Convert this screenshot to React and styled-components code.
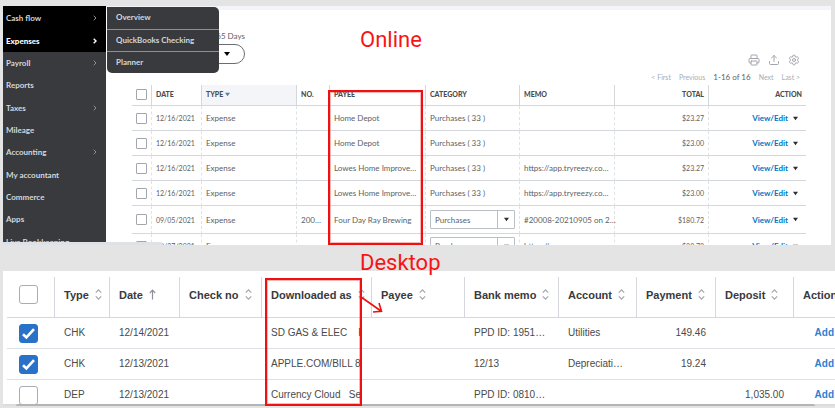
import styled, { createGlobalStyle } from "styled-components";
import { Printer, Upload, Settings } from "lucide-react";

const GlobalStyle = createGlobalStyle`
  * {
    box-sizing: border-box;
  }

  body {
    margin: 0;
    background: #e4e4e4;
    overflow: hidden;
  }

  button, select, input {
    font: inherit;
    margin: 0;
  }

  table {
    border-collapse: separate;
    border-spacing: 0;
    table-layout: fixed;
    width: 100%;
  }
`;

const Page = styled.main`
  display: flex;
  flex-direction: column;
  gap: 26px;
  padding-top: 6px;
`;

/* ---------- Online ---------- */

const OnlinePanel = styled.section`
  position: relative;
  display: flex;
  height: 239px;
  margin: 0 4px 0 3px;
  overflow: hidden;
  background: #fff;
  font-family: Lato, "Open Sans", sans-serif;
  font-size: 8px;
  line-height: 10px;
  color: #5c5f66;
`;

const Sidebar = styled.nav`
  flex: 0 0 103px;
  background: #393a3d;
  border-top: 1px solid #000;
`;

const Menu = styled.ul`
  display: grid;
  grid-auto-rows: 1fr;
  height: 246px;
  margin: 0;
  padding: 0;
  list-style: none;
`;

const MenuLink = styled.a`
  display: flex;
  align-items: center;
  justify-content: space-between;
  height: 100%;
  padding: 0 9px 0 3px;
  background: ${({ $dark }) => ($dark ? "#000" : "transparent")};
  color: ${({ $active }) => ($active ? "#fff" : "#d4d7dc")};
  font-weight: ${({ $active }) => ($active ? 900 : 700)};
  text-decoration: none;
`;

const Flyout = styled.ul`
  position: absolute;
  z-index: 2;
  top: 1px;
  left: 104px;
  width: 112px;
  margin: 0;
  padding: 0;
  list-style: none;
  overflow: hidden;
  background: #393a3d;
  border-radius: 0 5px 5px 5px;
`;

const FlyoutItem = styled.li`
  height: 22px;
  padding: 0 9px;
  line-height: 20px;

  & + & {
    border-top: 1px solid #8d9096;
  }

  a {
    color: #d4d7dc;
    font-weight: 700;
    text-decoration: none;
  }
`;

const Content = styled.div`
  flex: 1;
  min-width: 0;
  padding: 0 25px 0 26px;
  border-top: 4px solid #f4f5f8;
`;

const Toolbar = styled.div`
  display: flex;
  justify-content: space-between;
  height: 75px;
  padding: 21px 6px 3px 0;
`;

const Filters = styled.div`
  display: flex;
  flex-direction: column;
  gap: 3px;
  width: 113px;
  text-align: right;
`;

const Pill = styled.button`
  display: flex;
  align-items: center;
  justify-content: flex-end;
  gap: 5px;
  height: 20px;
  padding: 0 14px;
  background: #fff;
  border: 1px solid #6b6c72;
  border-radius: 10px;
  color: #0077c5;
`;

const Tools = styled.div`
  display: flex;
  flex-direction: column;
  align-items: flex-end;
  justify-content: flex-end;
  gap: 6px;
`;

const ToolRow = styled.div`
  display: flex;
  align-items: center;
  gap: 8px;
`;

const IconButton = styled.button`
  display: flex;
  padding: 0;
  background: none;
  border: 0;
  color: #a3a6ac;
`;

const PageButton = styled.button`
  padding: 0;
  background: none;
  border: 0;
  font-size: 7px;
  color: #a9acb3;
`;

const Th = styled.th`
  height: 21px;
  padding: 0 4px 2px;
  text-align: ${({ $right }) => ($right ? "right" : "left")};
  font-size: 7px;
  font-weight: 900;
  color: #4a4c50;
  background: ${({ $sorted }) => ($sorted ? "#f4f5f8" : "#fff")};
  border-bottom: 1px solid #d4d7dc;
  white-space: nowrap;

  & + & {
    border-left: 1px solid #d4d7dc;
  }
`;

const Td = styled.td`
  height: ${({ $tall }) => ($tall ? 28 : 25)}px;
  padding: 0 4px;
  text-align: ${({ $right }) => ($right ? "right" : "left")};
  font-size: ${({ $number }) => ($number ? 7 : 8)}px;
  border-bottom: 1px solid #d4d7dc;
  white-space: nowrap;

  & + & {
    border-left: 1px dashed #e0e2e6;
  }
`;

const SmallCheck = styled.input`
  appearance: none;
  display: block;
  width: 11px;
  height: 11px;
  background: #fff;
  border: 1px solid #a3a6ac;
  border-radius: 1px;
`;

const SelectBox = styled.div`
  position: relative;
  display: flex;
  height: 19px;
  border: 1px solid #babec5;
  border-radius: 1px;

  select {
    appearance: none;
    width: 100%;
    padding: 0 0 0 4px;
    background: none;
    border: 0;
    color: inherit;
  }
`;

const SelectArrow = styled.span`
  position: absolute;
  top: 0;
  right: 0;
  bottom: 0;
  display: flex;
  align-items: center;
  justify-content: center;
  width: 17px;
  border-left: 1px solid #babec5;
  pointer-events: none;
`;

const RowAction = styled.div`
  display: flex;
  align-items: center;
  justify-content: flex-end;
  gap: 5px;
  padding-right: 4px;

  a {
    color: #0077c5;
    font-weight: 700;
    text-decoration: none;
  }
`;

const StatusBar = styled.div`
  position: absolute;
  bottom: 0;
  left: 0;
  width: 160px;
  height: 3px;
  background: #dee1e6;
  border-top-right-radius: 3px;
`;

/* ---------- Desktop ---------- */

const DesktopPanel = styled.section`
  position: relative;
  height: 135px;
  margin-left: 3px;
  padding: 6px 0 0 4px;
  overflow: hidden;
  background: #fff;
  font-family: "Liberation Sans", Arial, sans-serif;
  font-size: 10px;
  line-height: 12px;
  color: #4a4a4a;
`;

const BankTh = styled.th`
  height: 41px;
  padding: 0 0 5px 9px;
  text-align: left;
  font-size: 11px;
  color: #393a3d;
  border-bottom: 1px solid #d4d7dc;
  white-space: nowrap;

  & + & {
    border-left: 1px solid #d4d7dc;
  }
`;

const ThLabel = styled.span`
  display: flex;
  align-items: center;
  gap: 6px;
`;

const BankTd = styled.td`
  height: 31px;
  padding: 0 9px 0 ${({ $check }) => ($check ? 9 : 10)}px;
  text-align: ${({ $right }) => ($right ? "right" : "left")};
  border-bottom: 1px solid #dcdfe3;
  white-space: nowrap;
`;

const ActionTd = styled(BankTd)`
  padding: 0 1px 0 0;
`;

const Clip = styled.span`
  display: block;
  overflow: hidden;
  white-space: pre;
`;

const AddLink = styled.a`
  color: #2f7fd0;
  font-weight: 700;
  text-decoration: none;
`;

const CheckLabel = styled.label`
  position: relative;
  display: block;
  width: 19px;
  height: 19px;
  margin-left: 3px;

  input {
    appearance: none;
    display: block;
    width: 19px;
    height: 19px;
    background: #fff;
    border: 1px solid #a9acb1;
    border-radius: 3px;
  }

  input:checked {
    background: #2a72c8;
    border-color: #2a72c8;
  }

  svg {
    position: absolute;
    top: 3px;
    left: 3px;
    pointer-events: none;
  }
`;

const ScrollTrack = styled.div`
  position: absolute;
  right: 0;
  bottom: 0;
  left: 0;
  height: 2px;
  padding: 0 20px 0 13px;
  background: #dcdcdc;

  &::before {
    content: "";
    display: block;
    height: 2px;
    background: #b4b4b4;
    border-radius: 2px 2px 0 0;
  }
`;

/* ---------- Red notes on top of both panels ---------- */

const Note = styled.h2`
  position: absolute;
  z-index: 3;
  top: ${({ $top }) => $top}px;
  left: 360px;
  margin: 0;
  font-family: Roboto, sans-serif;
  font-size: 22px;
  line-height: 26px;
  font-weight: 400;
  color: #f81414;
`;

const RedBox = styled.div`
  position: absolute;
  z-index: 3;
  top: ${({ $top }) => $top}px;
  left: ${({ $left }) => $left}px;
  width: ${({ $width }) => $width}px;
  height: ${({ $height }) => $height}px;
  border: 2px solid #ee1111;
  outline: 1px solid rgba(238, 17, 17, 0.3);
  outline-offset: -3px;
`;

const NoteArrow = styled.svg`
  position: absolute;
  z-index: 3;
  top: 296px;
  left: 360px;
`;

const Caret = ({ size = 5, color = "#2b2c2f" }) => (
  <svg width={size} height={size} viewBox="0 0 6 6" aria-hidden="true">
    <path d="M0 1h6L3 5z" fill={color} />
  </svg>
);

const Chevron = ({ active }) => (
  <svg width="4" height="6" viewBox="0 0 4 6" fill="none" aria-hidden="true">
    <path
      d="M0.7 0.7L3 3L0.7 5.3"
      stroke={active ? "#fff" : "#8d9096"}
      strokeWidth={active ? 1.4 : 1}
    />
  </svg>
);

const SortIcon = () => (
  <svg width="7" height="11" viewBox="0 0 7 11" fill="none" aria-hidden="true">
    <path
      d="M0.8 3.6l2.7-2.7 2.7 2.7M0.8 7.4l2.7 2.7 2.7-2.7"
      stroke="#a3a6ac"
      strokeWidth="1.2"
    />
  </svg>
);

const ArrowUp = () => (
  <svg width="7" height="11" viewBox="0 0 7 11" fill="none" aria-hidden="true">
    <path
      d="M3.5 10.5V1.2M0.8 4l2.7-2.8L6.2 4"
      stroke="#8d9096"
      strokeWidth="1.2"
    />
  </svg>
);

const menu = [
  { label: "Cash flow", arrow: true, dark: true },
  { label: "Expenses", arrow: true, dark: true, active: true },
  { label: "Payroll", arrow: true },
  { label: "Reports" },
  { label: "Taxes", arrow: true },
  { label: "Mileage" },
  { label: "Accounting", arrow: true },
  { label: "My accountant" },
  { label: "Commerce" },
  { label: "Apps" },
  { label: "Live Bookkeeping" },
];

const expenses = [
  { date: "12/16/2021", payee: "Home Depot", total: "$23.27" },
  { date: "12/16/2021", payee: "Home Depot", total: "$23.00" },
  {
    date: "12/16/2021",
    payee: "Lowes Home Improve…",
    memo: "https://app.tryreezy.co…",
    total: "$23.27",
  },
  {
    date: "12/16/2021",
    payee: "Lowes Home Improve…",
    memo: "https://app.tryreezy.co…",
    total: "$23.00",
  },
  {
    date: "09/05/2021",
    no: "200…",
    payee: "Four Day Ray Brewing",
    memo: "#20008-20210905 on 2…",
    total: "$180.72",
    editable: true,
    tall: true,
  },
  {
    date: "08/27/2021",
    memo: "https://",
    total: "$88.78",
    editable: true,
  },
];

const bankHeads = [
  "Type",
  "Date",
  "Check no",
  "Downloaded as",
  "Payee",
  "Bank memo",
  "Account",
  "Payment",
  "Deposit",
];

const bankRows = [
  {
    type: "CHK",
    date: "12/14/2021",
    name: "SD GAS & ELEC    F",
    memo: "PPD ID: 1951…",
    account: "Utilities",
    payment: "149.46",
    checked: true,
  },
  {
    type: "CHK",
    date: "12/13/2021",
    name: "APPLE.COM/BILL 86",
    memo: "12/13",
    account: "Depreciati…",
    payment: "19.24",
    checked: true,
  },
  {
    type: "DEP",
    date: "12/13/2021",
    name: "Currency Cloud   Ser",
    memo: "PPD ID: 0810…",
    deposit: "1,035.00",
  },
];

const Check = ({ label, checked }) => (
  <CheckLabel>
    <input type="checkbox" aria-label={label} defaultChecked={checked} />
    {checked && (
      <svg width="13" height="13" viewBox="0 0 13 13" fill="none">
        <path d="M1 7.2l3.4 3.3L12 2.2" stroke="#fff" strokeWidth="2.6" />
      </svg>
    )}
  </CheckLabel>
);

const Cols = ({ widths }) => (
  <colgroup>
    {widths.map((w, i) => (
      <col key={i} width={w || undefined} />
    ))}
  </colgroup>
);

const Online = () => (
  <OnlinePanel>
    <Sidebar>
      <Menu>
        {menu.map(({ label, arrow, dark, active }) => (
          <li key={label}>
            <MenuLink href="#" $dark={dark} $active={active}>
              {label}
              {arrow && <Chevron active={active} />}
            </MenuLink>
          </li>
        ))}
      </Menu>
    </Sidebar>
    <Flyout>
      {["Overview", "QuickBooks Checking", "Planner"].map((item) => (
        <FlyoutItem key={item}>
          <a href="#">{item}</a>
        </FlyoutItem>
      ))}
    </Flyout>
    <Content>
      <Toolbar>
        <Filters>
          <span>Last 365 Days</span>
          <Pill>
            Filters <Caret size={6} color="#000" />
          </Pill>
        </Filters>
        <Tools>
          <ToolRow>
            <IconButton aria-label="Print">
              <Printer size={12} />
            </IconButton>
            <IconButton aria-label="Export">
              <Upload size={12} />
            </IconButton>
            <IconButton aria-label="Settings">
              <Settings size={12} />
            </IconButton>
          </ToolRow>
          <ToolRow>
            <PageButton>&lt; First</PageButton>
            <PageButton>Previous</PageButton>
            <span>1-16 of 16</span>
            <PageButton>Next</PageButton>
            <PageButton>Last &gt;</PageButton>
          </ToolRow>
        </Tools>
      </Toolbar>
      <table>
        <Cols widths={[19, 50, 95, 33, 0, 94, 95, 94, 98]} />
        <thead>
          <tr>
            <Th>
              <SmallCheck type="checkbox" aria-label="Select all" />
            </Th>
            <Th>DATE</Th>
            <Th $sorted>
              TYPE <Caret color="#5c7f9c" />
            </Th>
            <Th>NO.</Th>
            <Th>PAYEE</Th>
            <Th>CATEGORY</Th>
            <Th>MEMO</Th>
            <Th $right>TOTAL</Th>
            <Th $right>ACTION</Th>
          </tr>
        </thead>
        <tbody>
          {expenses.map(
            ({ date, no, payee, memo, total, editable, tall }, i) => (
              <tr key={i}>
                <Td $tall={tall}>
                  <SmallCheck type="checkbox" aria-label={`Expense ${i + 1}`} />
                </Td>
                <Td $number>{date}</Td>
                <Td>Expense</Td>
                <Td>{no}</Td>
                <Td>{payee}</Td>
                <Td>
                  {editable ? (
                    <SelectBox>
                      <select aria-label={`Category ${i + 1}`}>
                        <option>Purchases</option>
                      </select>
                      <SelectArrow>
                        <Caret />
                      </SelectArrow>
                    </SelectBox>
                  ) : (
                    "Purchases ( 33 )"
                  )}
                </Td>
                <Td>{memo}</Td>
                <Td $right $number>
                  {total}
                </Td>
                <Td $right>
                  <RowAction>
                    <a href="#">View/Edit</a>
                    <Caret />
                  </RowAction>
                </Td>
              </tr>
            )
          )}
        </tbody>
      </table>
    </Content>
    <StatusBar />
  </OnlinePanel>
);

const Desktop = () => (
  <DesktopPanel>
    <table>
      <Cols widths={[47, 55, 70, 82, 110, 0, 94, 78, 79, 78, 42]} />
      <thead>
        <tr>
          <BankTh>
            <Check label="Select all" />
          </BankTh>
          {bankHeads.map((head) => (
            <BankTh key={head}>
              <ThLabel>
                {head}
                {head === "Date" ? <ArrowUp /> : <SortIcon />}
              </ThLabel>
            </BankTh>
          ))}
          <BankTh>Action</BankTh>
        </tr>
      </thead>
      <tbody>
        {bankRows.map((row, i) => (
          <tr key={i}>
            <BankTd $check>
              <Check label={`Transaction ${i + 1}`} checked={row.checked} />
            </BankTd>
            <BankTd>{row.type}</BankTd>
            <BankTd>{row.date}</BankTd>
            <BankTd />
            <BankTd>
              <Clip>{row.name}</Clip>
            </BankTd>
            <BankTd />
            <BankTd>{row.memo}</BankTd>
            <BankTd>{row.account}</BankTd>
            <BankTd $right>{row.payment}</BankTd>
            <BankTd $right>{row.deposit}</BankTd>
            <ActionTd $right>
              <AddLink href="#">Add</AddLink>
            </ActionTd>
          </tr>
        ))}
      </tbody>
    </table>
    <ScrollTrack />
  </DesktopPanel>
);

const App = () => {
  return (
    <>
      <GlobalStyle />
      <Page>
        <Online />
        <Desktop />
      </Page>
      <Note $top={27}>Online</Note>
      <RedBox $top={90} $left={328} $width={95} $height={155} />
      <Note $top={250}>Desktop</Note>
      <RedBox $top={278} $left={265} $width={97} $height={128} />
      <NoteArrow width="24" height="18" viewBox="0 0 24 18" fill="none">
        <path
          d="M1 1l20 14M13 16l8.5-0.8L19 7"
          stroke="#ee1111"
          strokeWidth="1.6"
        />
      </NoteArrow>
    </>
  );
};

export default App;
